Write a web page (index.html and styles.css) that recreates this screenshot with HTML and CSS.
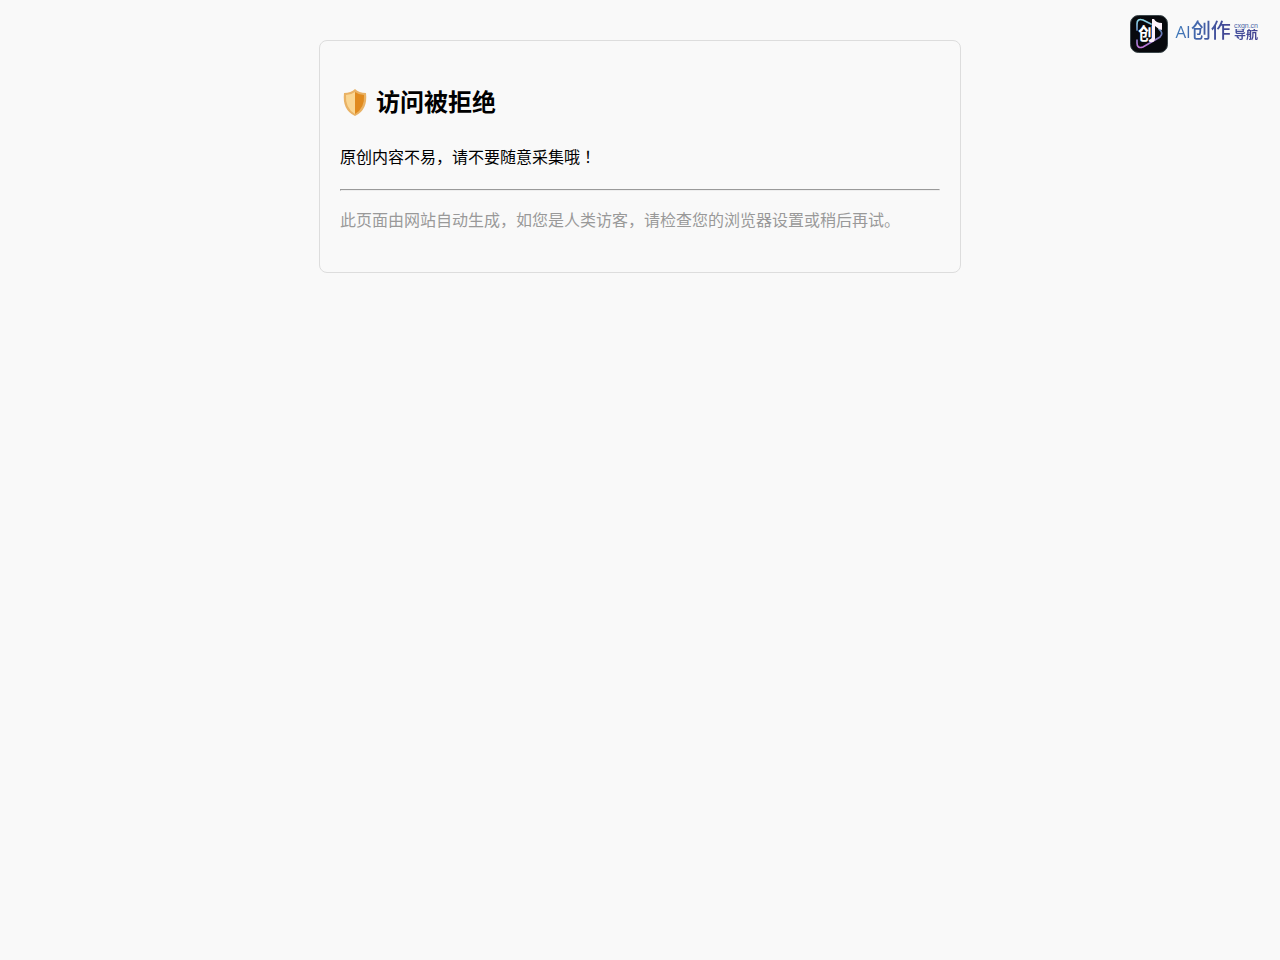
FILE: index.html
```html
<!DOCTYPE html>
<html lang="zh-CN">
<head>
<meta charset="utf-8">
<meta name="viewport" content="width=device-width, initial-scale=1">
<title>访问被拒绝</title>
<link rel="stylesheet" href="styles.css">
</head>
<body>
<div class="brand" role="img" aria-label="AI创作导航">
  <svg class="brand-mark" viewBox="0 0 38 38" aria-hidden="true">
    <defs>
      <linearGradient id="ring" x1="0" y1="0" x2="0" y2="1">
        <stop offset="0" stop-color="#8fdcec"/>
        <stop offset=".5" stop-color="#6579b4"/>
        <stop offset="1" stop-color="#c478dc"/>
      </linearGradient>
    </defs>
    <rect x=".5" y=".5" width="37" height="37" rx="8" fill="#08090d" stroke="#3c474b"/>
    <path d="M7 15 V9 Q7 3 13 5 L21 9 M29 14 Q34 18 30 22 L13 32 Q7 34 7 28 V25" fill="none" stroke="url(#ring)" stroke-width="1.7" stroke-linecap="round"/>
    <text class="mark-text" x="8" y="25">创</text>
    <path d="M22 4 H24 Q26 8 32 8 V15 Q28 14 25 11 V24 Q24 28 20 27 L19 25 L22 23Z" fill="#fdf2fb"/>
  </svg>
  <span class="brand-name"><span class="brand-latin">AI</span>创作</span>
  <span class="brand-side"><span class="brand-domain">cxgn.cn</span><span class="brand-sub">导航</span></span>
</div>
<main class="notice">
  <h2 class="notice-title">
    <svg class="shield" viewBox="0 0 30 30" aria-hidden="true">
      <path d="M15 1 Q19 5 26 5 Q28 22 15 28 Q2 22 4 5 Q11 5 15 1Z" fill="#e9b265"/>
      <path d="M15 4 V26 Q5 20 6 7 Q11 7 15 4Z" fill="#fad692"/>
      <path d="M15 4 Q19 7 24 7 Q25 20 15 26Z" fill="#e08a1e"/>
    </svg>
    访问被拒绝
  </h2>
  <p>原创内容不易，请不要随意采集哦<span class="mark" lang="zh-TW">！</span></p>
  <hr>
  <p class="hint">此页面由网站自动生成，如您是人类访客，请检查您的浏览器设置或稍后再试。</p>
</main>
</body>
</html>
```
FILE: styles.css
```css
body {
  margin: 0;
  padding: 40px 20px;
  background: #f9f9f9;
  color: #000;
  font-family: "Liberation Sans", "Noto Sans CJK SC", sans-serif;
  font-size: 16px;
  line-height: 1.8;
}

.notice {
  max-width: 600px;
  margin: 0 auto;
  padding: 20px;
  border: 1px solid #ddd;
  border-radius: 8px;
}

.notice-title {
  display: flex;
  align-items: center;
  gap: 6px;
  margin: 20px 0;
  font-size: 24px;
}

.shield {
  width: 30px;
  height: 30px;
}

.notice p {
  margin: 16px 0;
}

.notice hr {
  margin: 16px 0;
}

.notice .hint {
  color: #999;
}

.mark {
  font-family: "Noto Sans CJK TC", sans-serif;
  line-height: 1;
}

.brand {
  position: absolute;
  top: 15px;
  right: 22px;
  display: flex;
  align-items: flex-start;
  gap: 3px;
  line-height: 1;
}

.brand-mark {
  width: 38px;
  height: 38px;
  margin-right: 4px;
}

.mark-text {
  font-size: 17px;
  font-weight: 700;
  fill: #fff;
}

.brand-name,
.brand-sub {
  background: linear-gradient(100deg, #3f7dbd, #43408f);
  background-clip: text;
  color: transparent;
}

.brand-name {
  padding-top: 6px;
  font-size: 20px;
  font-weight: 500;
}

.brand-latin {
  font-family: "Open Sans", sans-serif;
  font-size: 17px;
}

.brand-side {
  display: flex;
  flex-direction: column;
  padding-top: 7px;
}

.brand-domain {
  color: #4a64a8;
  font-size: 7px;
}

.brand-sub {
  background-image: linear-gradient(100deg, #45529f, #43408f);
  font-size: 12px;
  font-weight: 700;
}
```
